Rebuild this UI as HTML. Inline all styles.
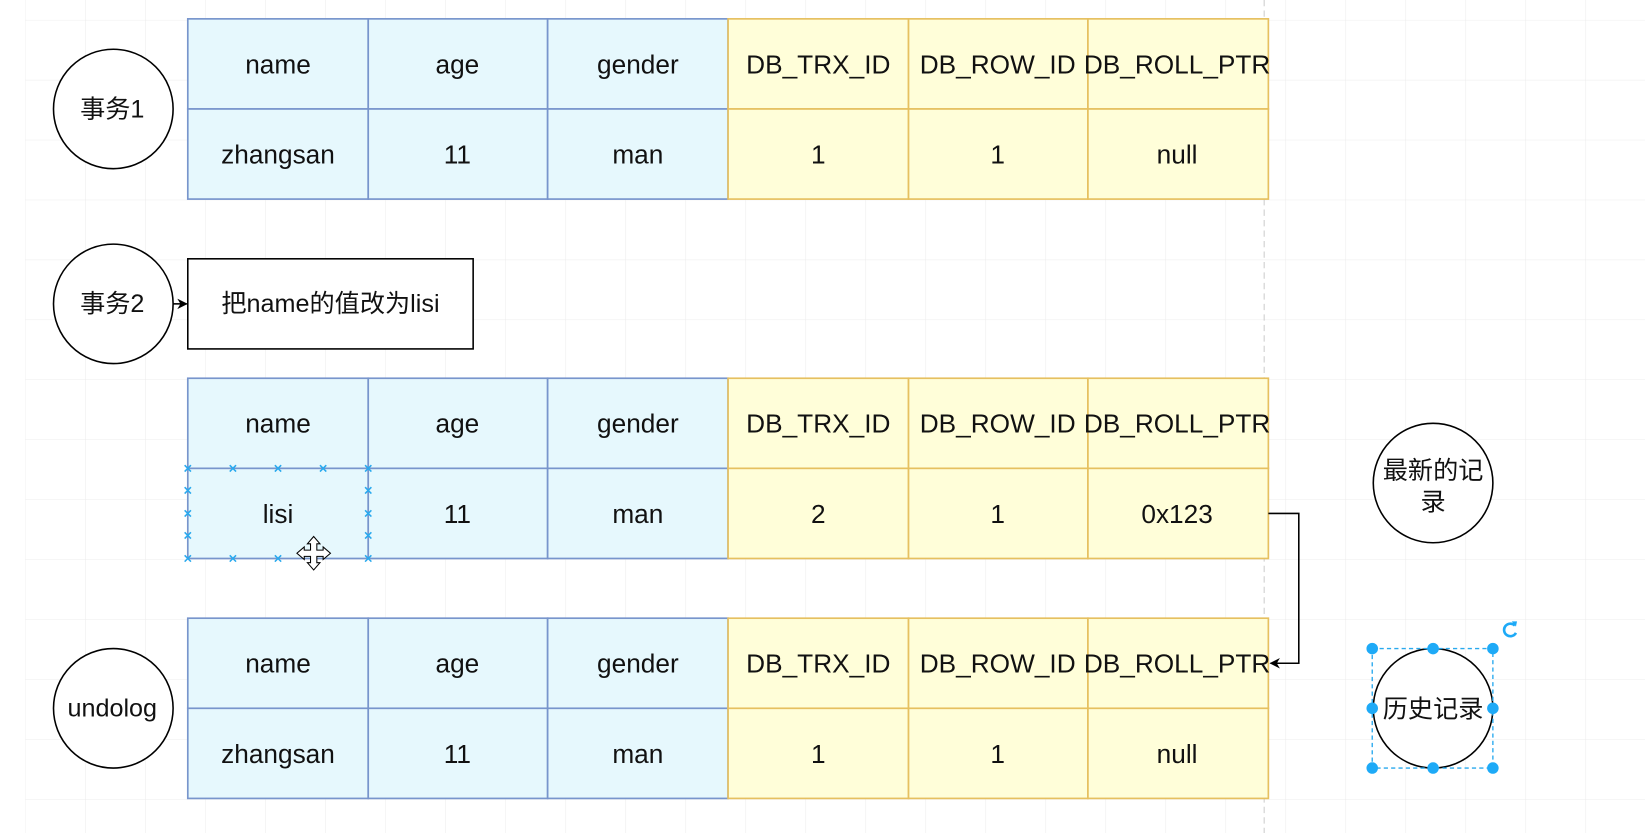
<!DOCTYPE html>
<html><head><meta charset="utf-8"><style>
html,body{margin:0;padding:0;background:#fff;overflow:hidden}
svg{display:block}
text{font-family:"Liberation Sans","Noto Sans CJK SC",sans-serif;font-size:25px;fill:#111}
.c{font-size:24px}
</style></head><body>
<svg width="1645" height="833" viewBox="0 0 1568 795" preserveAspectRatio="none" xmlns="http://www.w3.org/2000/svg">
<defs>
<pattern id="g" x="24" y="19" width="57.2" height="57.2" patternUnits="userSpaceOnUse">
<path d="M0 0H57.2M0 0V57.2" stroke="#ececec" stroke-width="1" fill="none"/>
</pattern>
<marker id="ah" markerWidth="10" markerHeight="10" refX="9" refY="5" orient="auto" markerUnits="userSpaceOnUse"><path d="M0 0L10 5L0 10L3 5Z" fill="#000"/></marker>
</defs>
<rect x="24" y="0" width="1544" height="795" fill="url(#g)"/>
<line x1="1205" y1="0" x2="1205" y2="795" stroke="#ccc" stroke-dasharray="6 4"/>

<g id="t1">
<g stroke="#7895cc" stroke-width="1.6" fill="#e6f8fd">
<rect x="179" y="18" width="172" height="86"/><rect x="351" y="18" width="171" height="86"/><rect x="522" y="18" width="172" height="86"/>
<rect x="179" y="104" width="172" height="86"/><rect x="351" y="104" width="171" height="86"/><rect x="522" y="104" width="172" height="86"/>
</g>
<g stroke="#e6c060" stroke-width="1.6" fill="#fffed9">
<rect x="694" y="18" width="172" height="86"/><rect x="866" y="18" width="171" height="86"/><rect x="1037" y="18" width="172" height="86"/>
<rect x="694" y="104" width="172" height="86"/><rect x="866" y="104" width="171" height="86"/><rect x="1037" y="104" width="172" height="86"/>
</g>
</g>
<g text-anchor="middle">
<text x="265" y="70">name</text><text x="436" y="70">age</text><text x="608" y="70">gender</text>
<text x="780" y="70">DB_TRX_ID</text><text x="951" y="70">DB_ROW_ID</text><text x="1122" y="70">DB_ROLL_PTR</text>
<text x="265" y="156">zhangsan</text><text x="436" y="156">11</text><text x="608" y="156">man</text>
<text x="780" y="156">1</text><text x="951" y="156">1</text><text x="1122" y="156">null</text>
</g>

<use href="#t1" transform="translate(0,343)"/>
<g text-anchor="middle">
<text x="265" y="413">name</text><text x="436" y="413">age</text><text x="608" y="413">gender</text>
<text x="780" y="413">DB_TRX_ID</text><text x="951" y="413">DB_ROW_ID</text><text x="1122" y="413">DB_ROLL_PTR</text>
<text x="265" y="499">lisi</text><text x="436" y="499">11</text><text x="608" y="499">man</text>
<text x="780" y="499">2</text><text x="951" y="499">1</text><text x="1122" y="499">0x123</text>
</g>

<use href="#t1" transform="translate(0,572)"/>
<g text-anchor="middle">
<text x="265" y="642">name</text><text x="436" y="642">age</text><text x="608" y="642">gender</text>
<text x="780" y="642">DB_TRX_ID</text><text x="951" y="642">DB_ROW_ID</text><text x="1122" y="642">DB_ROLL_PTR</text>
<text x="265" y="728">zhangsan</text><text x="436" y="728">11</text><text x="608" y="728">man</text>
<text x="780" y="728">1</text><text x="951" y="728">1</text><text x="1122" y="728">null</text>
</g>

<g fill="#fff" stroke="#000" stroke-width="1.5">
<circle cx="108" cy="104" r="57"/><circle cx="108" cy="290" r="57"/><circle cx="108" cy="676" r="57"/>
<circle cx="1366" cy="461" r="57"/><circle cx="1366" cy="676" r="57"/>
<rect x="179" y="247" width="272" height="86"/>
</g>
<line x1="165" y1="290" x2="178" y2="290" stroke="#000" stroke-width="1.5" marker-end="url(#ah)"/>
<path d="M1209 490H1238V633H1211" fill="none" stroke="#000" stroke-width="1.5" marker-end="url(#ah)"/>

<g text-anchor="middle" class="c">
<text class="c" x="107" y="112">事务1</text><text class="c" x="107" y="298">事务2</text><text class="c" x="107" y="684">undolog</text>
<text class="c" x="315" y="298">把name的值改为lisi</text>
<text class="c" x="1366" y="457">最新的记</text><text class="c" x="1366" y="487">录</text>
<text class="c" x="1366" y="685">历史记录</text>
</g>

<g stroke="#29a9ee" stroke-width="1.5">
<path d="M176 444l6 6m0-6l-6 6M219 444l6 6m0-6l-6 6M262 444l6 6m0-6l-6 6M305 444l6 6m0-6l-6 6M348 444l6 6m0-6l-6 6
M176 530l6 6m0-6l-6 6M219 530l6 6m0-6l-6 6M262 530l6 6m0-6l-6 6M348 530l6 6m0-6l-6 6
M176 465l6 6m0-6l-6 6M176 487l6 6m0-6l-6 6M176 508l6 6m0-6l-6 6
M348 465l6 6m0-6l-6 6M348 487l6 6m0-6l-6 6M348 508l6 6m0-6l-6 6"/>
</g>
<path d="M299 512l6 7h-3v6h6v-3l7 6-7 6v-3h-6v6h3l-6 7-6-7h3v-6h-6v3l-7-6 7-6v3h6v-6h-3z" fill="#fff" stroke="#000" stroke-width="1"/>

<rect x="1308" y="619" width="115" height="114" fill="none" stroke="#29a9ee" stroke-width="1.3" stroke-dasharray="4 3"/>
<g fill="#1eaaf7">
<circle cx="1308" cy="619" r="5.5"/><circle cx="1366" cy="619" r="5.5"/><circle cx="1423" cy="619" r="5.5"/>
<circle cx="1308" cy="676" r="5.5"/><circle cx="1423" cy="676" r="5.5"/>
<circle cx="1308" cy="733" r="5.5"/><circle cx="1366" cy="733" r="5.5"/><circle cx="1423" cy="733" r="5.5"/>
</g>
<path d="M1444 597a6 6 0 1 0 1 7" fill="none" stroke="#1eaaf7" stroke-width="2.5"/>
<path d="M1441 593l5 0-1 5z" fill="#1eaaf7"/>
</svg>
</body></html>
